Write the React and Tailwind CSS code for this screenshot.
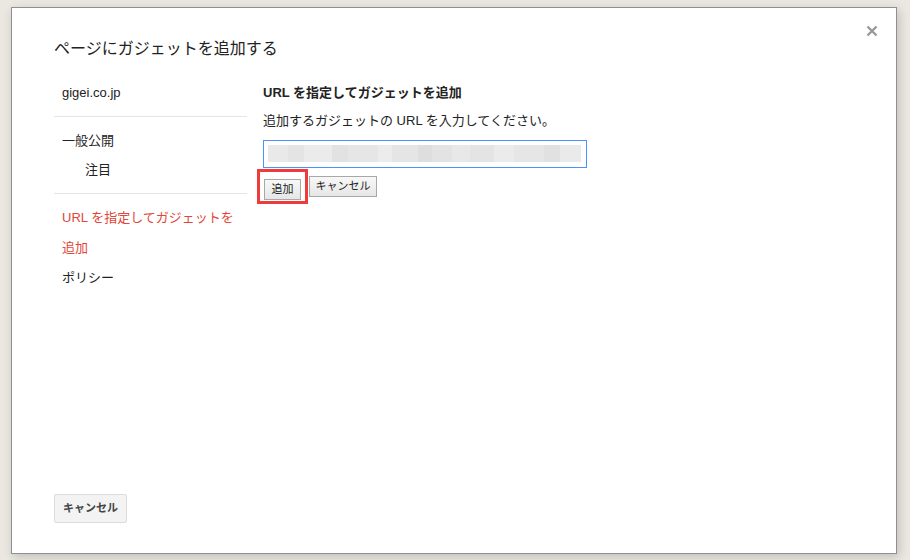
import React from 'react';

const font = { fontFamily: '"Liberation Sans", "Noto Sans CJK JP", sans-serif' };

const NavItem = ({ children, indent, active }) => (
    <div
        className={`text-[13px] ${active ? 'leading-[30px]' : 'leading-[29px]'} ${
            indent ? 'pl-[31px]' : 'pl-2'
        } ${active ? 'text-[#e0463a]' : 'text-[#222]'}`}
    >
        {children}
    </div>
);

const Divider = () => <div className="h-px bg-[#e5e5e5] my-[9px]" />;

const App = () => {
    return (
        <div
            className="w-[910px] h-[560px] bg-[#ebe8e2] pl-[11px] pt-[7px] overflow-hidden"
            style={font}
        >
            <div className="relative w-[886px] h-[547px] bg-white border border-[#8f8f8f] shadow-[2px_3px_10px_rgba(0,0,0,0.18)] flex flex-col pl-[42px] pt-[29px] pb-[30px]">
                <button className="absolute right-[18px] top-[17px] w-[12px] h-[12px]">
                    <svg viewBox="0 0 12 12" className="w-[12px] h-[12px]">
                        <path
                            d="M1.5 1.5 L10.5 10.5 M10.5 1.5 L1.5 10.5"
                            stroke="#999"
                            strokeWidth="2.4"
                            fill="none"
                        />
                    </svg>
                </button>
                <h2 className="text-[16px] leading-[24px] text-[#222]">
                    ページにガジェットを追加する
                </h2>
                <div className="flex gap-[16px] mt-[17px]">
                    <div className="w-[193px]">
                        <NavItem>gigei.co.jp</NavItem>
                        <Divider />
                        <NavItem>一般公開</NavItem>
                        <NavItem indent>注目</NavItem>
                        <Divider />
                        <NavItem active>
                            URL を指定してガジェットを
                            <br />
                            追加
                        </NavItem>
                        <NavItem>ポリシー</NavItem>
                    </div>
                    <div className="w-[330px]">
                        <div className="text-[13px] leading-[29px] font-bold text-[#222]">
                            URL を指定してガジェットを追加
                        </div>
                        <div className="text-[13px] leading-[27px] text-[#222]">
                            追加するガジェットの URL を入力してください。
                        </div>
                        <div className="mt-[6px] w-[324px] h-[28px] border border-[#4d90fe] p-[4px] pr-[5px]">
                            <div className="flex h-[17px]">
                                <div className="w-[20px] bg-[#e9e9e9]" />
                                <div className="w-[16px] bg-[#e4e4e4]" />
                                <div className="w-[28px] bg-[#ebebeb]" />
                                <div className="w-[16px] bg-[#e2e2e2]" />
                                <div className="w-[30px] bg-[#e6e6e6]" />
                                <div className="w-[14px] bg-[#ececec]" />
                                <div className="w-[26px] bg-[#e5e5e5]" />
                                <div className="w-[14px] bg-[#dedede]" />
                                <div className="w-[20px] bg-[#e3e3e3]" />
                                <div className="w-[18px] bg-[#e8e8e8]" />
                                <div className="w-[24px] bg-[#e4e4e4]" />
                                <div className="w-[20px] bg-[#ebebeb]" />
                                <div className="w-[30px] bg-[#e6e6e6]" />
                                <div className="w-[16px] bg-[#e1e1e1]" />
                                <div className="flex-1 bg-[#eaeaea]" />
                            </div>
                        </div>
                        <div className="flex gap-[8px] mt-[8px] pl-px">
                            <div className="relative">
                                <button className="h-[21px] w-[37px] text-[11px] text-[#222] border border-[#a8a8a8] bg-gradient-to-b from-[#f8f8f8] to-[#e6e6e6] leading-[19px]">
                                    追加
                                </button>
                                <div className="absolute left-[-7px] top-[-7px] w-[51px] h-[35px] border-[3px] border-[#ee3b3b]" />
                            </div>
                            <button className="h-[21px] w-[68px] text-[11px] text-[#222] border border-[#a8a8a8] bg-gradient-to-b from-[#f8f8f8] to-[#e6e6e6] leading-[19px]">
                                キャンセル
                            </button>
                        </div>
                    </div>
                </div>
                <div className="mt-auto">
                    <button className="h-[29px] w-[73px] rounded-[2px] border border-[#dcdcdc] bg-[#f3f3f3] text-[11px] font-bold text-[#444]">
                        キャンセル
                    </button>
                </div>
            </div>
        </div>
    );
};

export default App;
